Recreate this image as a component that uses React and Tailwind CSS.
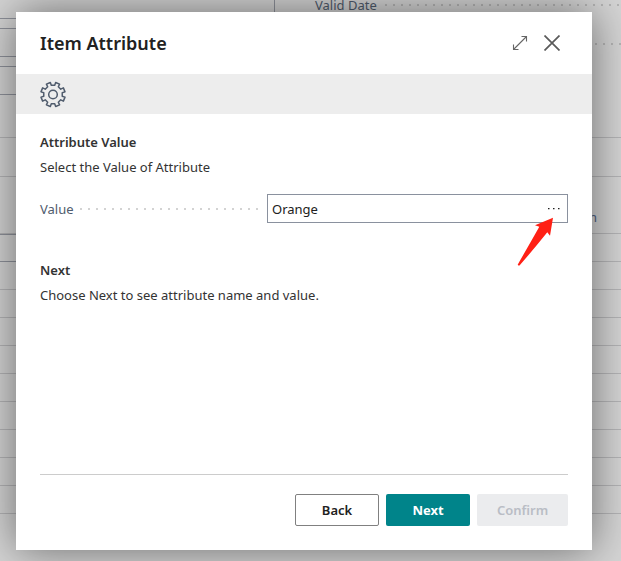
import React, { useState } from 'react';

const GEAR_TEETH = 8;

// Outline of the cog: each tooth has two outer and two root corners
const gearPath = () => {
  const points = [];
  for (let i = 0; i < GEAR_TEETH; i++) {
    const mid = 22.5 + i * 45;
    [[-12, 9.4], [-10, 12.3], [10, 12.3], [12, 9.4]].forEach(([offset, radius]) => {
      const angle = ((mid + offset) * Math.PI) / 180;
      points.push(`${(14 + radius * Math.cos(angle)).toFixed(2)} ${(14.5 + radius * Math.sin(angle)).toFixed(2)}`);
    });
  }
  return `M${points.join('L')}Z`;
};

const GearIcon = () => (
  <svg width="28" height="29" viewBox="0 0 28 29" fill="none" stroke="#505c6d" strokeWidth="1.5" strokeLinejoin="round">
    <path d={gearPath()} />
    <circle cx="14" cy="14.5" r="4.3" />
  </svg>
);

const ExpandIcon = () => (
  <svg width="16" height="16" viewBox="0 0 16 16" fill="none" stroke="#666666" strokeWidth="1.1">
    <path d="M1.5 14.5 14.5 1.5M9.5 1.5h5v5M1.5 9.5v5h5" />
  </svg>
);

const CloseIcon = () => (
  <svg width="16" height="16" viewBox="0 0 16 16" fill="none" stroke="#5a5a5a" strokeWidth="1.7">
    <path d="M.5.5l15 15M15.5.5l-15 15" />
  </svg>
);

const Dots = () => (
  <span className="h-0.5 flex-1 bg-[linear-gradient(to_right,#d3d3d3_2px,transparent_2px)] bg-[length:8px_2px]" />
);

const DimDots = () => (
  <span className="h-0.5 flex-1 bg-[linear-gradient(to_right,#b5b5b5_2px,transparent_2px)] bg-[length:8px_2px]" />
);

const listRows = [1, 2, 3, 4, 5, 6, 7, 8, 9];

const PageBehind = () => (
  <div aria-hidden="true" className="absolute inset-0 overflow-hidden bg-[#d5d5d5] text-[13px] text-[#505c6d]">
    <div className="flex h-[138px] border-b border-[#b5b5b7]">
      <div className="-mt-2.5 flex w-[275px] flex-col gap-[9px] border-r border-[#8f929b]">
        <div className="h-[29px] border-y border-[#8f929b]" />
        <div className="h-[29px] border-y border-[#8f929b]" />
        <div className="h-[29px] border-y border-[#8f929b]" />
      </div>
      <div className="-mt-3.5 flex-1 pl-10">
        <div className="flex h-[38px] items-center gap-2">
          <span>Valid Date</span>
          <DimDots />
        </div>
        <div className="flex h-10 items-center">
          <DimDots />
        </div>
      </div>
    </div>
    <div className="h-[39px] border-b border-[#b5b5b7]" />
    <div className="flex h-[57px] items-end justify-end border-b border-[#b5b5b7] pr-6 pb-1.5 text-[#4d6082]">n</div>
    <div className="flex h-7">
      <div className="w-1/2 border-y border-[#8f929b]" />
      <div className="w-1/2 border-b border-[#b5b5b7]" />
    </div>
    {listRows.map((row) => (
      <div key={row} className="h-7 border-b border-[#b5b5b7]" />
    ))}
  </div>
);

const App = () => {
  const [value, setValue] = useState('Orange');

  return (
    <div className="relative flex min-h-screen pt-3 pr-[29px] pb-[11px] pl-4 font-['Noto_Sans','Open_Sans',sans-serif] text-[13px] leading-5 text-[#333333]">
      <PageBehind />

      <div
        role="dialog"
        aria-labelledby="dialog-title"
        className="relative flex flex-1 flex-col bg-white shadow-[0_0_42px_rgba(0,0,0,0.5)]"
      >
        {/* Header */}
        <div className="flex h-[62px] items-center justify-between px-6">
          <h1 id="dialog-title" className="text-lg font-semibold text-[#212121]">Item Attribute</h1>
          <div className="flex items-center gap-4 pr-2">
            <button type="button" aria-label="Expand">
              <ExpandIcon />
            </button>
            <button type="button" aria-label="Close">
              <CloseIcon />
            </button>
          </div>
        </div>

        <div className="flex h-10 items-center bg-[#ededed] px-[23px] pt-px">
          <GearIcon />
        </div>

        {/* Content */}
        <div className="flex-1 px-6 pt-[18px]">
          <h2 className="font-semibold">Attribute Value</h2>
          <p className="mt-[5px]">Select the Value of Attribute</p>

          <div className="mt-[17px] grid grid-cols-[43%_1fr] items-center">
            <div className="flex items-center gap-1.5 pr-1.5">
              <label htmlFor="attribute-value" className="text-[#505c6d]">Value</label>
              <Dots />
            </div>
            <div className="relative flex h-[29px] border border-[#8a919e]">
              <input
                id="attribute-value"
                type="text"
                value={value}
                onChange={(e) => setValue(e.target.value)}
                className="min-w-0 flex-1 px-1 text-[#212121] outline-none"
              />
              <button type="button" aria-label="Choose a value" className="flex w-[26px] items-center justify-center">
                <svg width="14" height="4" viewBox="0 0 14 4" fill="#212121">
                  <path d="M1 1h1.5v1.2H1zM6 1h1.5v1.2H6zM11 1h1.5v1.2h-1.5z" />
                </svg>
              </button>
              <svg className="pointer-events-none absolute top-[22px] right-[13px]" width="37" height="49" viewBox="0 0 37 49" fill="#ff2015">
                <path d="M36 .7 33 18.8 30.3 15.3Q17 32 2.5 48.4Q.5 49 .8 47.4Q12 28 22.3 9.7L18 8.3Z" />
              </svg>
            </div>
          </div>

          <h2 className="mt-[37px] font-semibold">Next</h2>
          <p className="mt-[5px]">Choose Next to see attribute name and value.</p>
        </div>

        {/* Footer */}
        <div className="mx-6 flex justify-end gap-[7px] border-t border-[#cccccc] pt-[19px] pb-6 font-semibold">
          <button type="button" className="h-8 w-[84px] rounded-xs border border-[#808080] text-[#212121]">
            Back
          </button>
          <button type="button" className="h-8 w-[84px] rounded-xs bg-[#00848a] font-bold text-white">
            Next
          </button>
          <button type="button" disabled className="h-8 w-[91px] rounded-xs bg-[#ebecee] text-[#b9bdc5]">
            Confirm
          </button>
        </div>
      </div>
    </div>
  );
};

export default App;
